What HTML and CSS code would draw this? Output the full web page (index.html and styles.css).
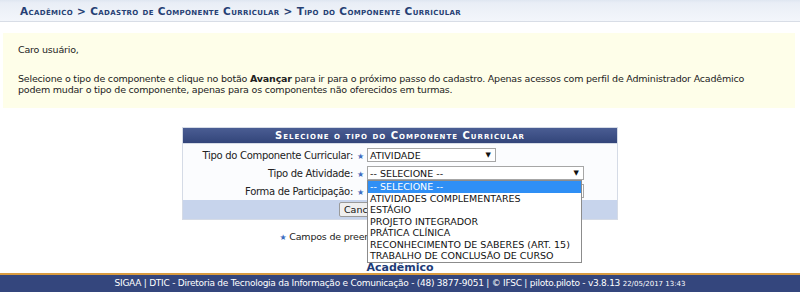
FILE: index.html
```html
<!DOCTYPE html>
<html lang="pt-BR">
<head>
    <meta charset="UTF-8">
    <title>SIGAA - Tipo do Componente Curricular</title>
    <link rel="stylesheet" href="styles.css">
</head>
<body>
    <div class="topo">
        <h2 class="trilha">Acadêmico &gt; Cadastro de Componente Curricular &gt; Tipo do Componente Curricular</h2>
    </div>

    <div class="aviso">
        <p>Caro usuário,</p>
        <p class="instrucao">Selecione o tipo de componente e clique no botão <b>Avançar</b> para ir para o próximo passo do cadastro. Apenas acessos com perfil de Administrador Acadêmico podem mudar o tipo de componente, apenas para os componentes não oferecidos em turmas.</p>
    </div>

    <table class="formulario">
        <caption>Selecione o tipo do Componente Curricular</caption>
        <tbody>
            <tr>
                <th>Tipo do Componente Curricular:</th>
                <td class="req"><span class="estrela">&#9733;</span></td>
                <td>
                    <div class="combo combo-tipo"><span>ATIVIDADE</span><span class="seta">&#9660;</span></div>
                </td>
            </tr>
            <tr>
                <th>Tipo de Atividade:</th>
                <td class="req"><span class="estrela">&#9733;</span></td>
                <td>
                    <div class="combo combo-atividade">
                        <span>-- SELECIONE --</span><span class="seta">&#9660;</span>
                        <ul class="opcoes">
                            <li class="ativa">-- SELECIONE --</li>
                            <li>ATIVIDADES COMPLEMENTARES</li>
                            <li>ESTÁGIO</li>
                            <li>PROJETO INTEGRADOR</li>
                            <li>PRÁTICA CLÍNICA</li>
                            <li>RECONHECIMENTO DE SABERES (ART. 15)</li>
                            <li>TRABALHO DE CONCLUSÃO DE CURSO</li>
                        </ul>
                    </div>
                </td>
            </tr>
            <tr>
                <th>Forma de Participação:</th>
                <td class="req"><span class="estrela">&#9733;</span></td>
                <td>
                    <div class="combo combo-forma"><span>-- SELECIONE --</span><span class="seta">&#9660;</span></div>
                </td>
            </tr>
        </tbody>
        <tfoot>
            <tr>
                <td colspan="3">
                    <button type="button">Cancelar</button>
                    <button type="button">Avançar &gt;&gt;</button>
                </td>
            </tr>
        </tfoot>
    </table>

    <p class="obrigatorio"><span class="estrela">&#9733;</span> Campos de preenchimento obrigatório.</p>

    <div class="modulo"><a href="#">Acadêmico</a></div>

    <div class="rodape">
        SIGAA | DTIC - Diretoria de Tecnologia da Informação e Comunicação - (48) 3877-9051 | &copy; IFSC | piloto.piloto - v3.8.13 <small>22/05/2017 13:43</small>
    </div>
</body>
</html>
```

FILE: styles.css
```css
body {
    margin: 0;
    font-family: "DejaVu Sans", Verdana, sans-serif;
    font-size: 9.5px;
    letter-spacing: -0.2px;
    color: #222;
    background: white;
}

.topo {
    height: 21px;
    background: linear-gradient(#dfe6f1 0, #e9eef6 3px, #f3f6fb 100%);
    border-bottom: 1px solid #d8dde6;
    padding-left: 20px;
}

.trilha {
    margin: 0;
    line-height: 23px;
    font-size: 10.5px;
    letter-spacing: 0.35px;
    font-weight: bold;
    font-variant: small-caps;
    color: #263f74;
}

.aviso {
    margin: 11px 5px 0 3px;
    height: 64px;
    padding: 11px 40px 0 15px;
    background: #fefee9;
    letter-spacing: -0.2px;
}

.aviso p {
    margin: 0;
    line-height: 11px;
}

.aviso .instrucao {
    margin-top: 18px;
}

.formulario {
    width: 436px;
    margin: 19px auto 0;
    border-collapse: collapse;
    border: 1px solid #d5dbe6;
    background: #fbfcfe;
}

.formulario caption {
    height: 15px;
    line-height: 16px;
    background: linear-gradient(#4a5d93, #33457a);
    color: white;
    font-size: 10px;
    font-weight: bold;
    font-variant: small-caps;
    letter-spacing: 1px;
    border: 1px solid #d5dbe6;
    border-bottom: none;
}

.formulario th {
    width: 170px;
    padding: 0 1px 0 0;
    text-align: right;
    font-weight: normal;
    font-size: 10px;
    letter-spacing: -0.3px;
    height: 18px;
}

.formulario td {
    padding: 0;
    height: 18px;
}

.formulario tbody tr:first-child > * {
    padding-top: 2px;
}

.formulario td.req {
    width: 13px;
    text-align: center;
}

.estrela {
    color: #3d6cc0;
    font-size: 8px;
}

.combo {
    position: relative;
    display: flex;
    justify-content: space-between;
    align-items: center;
    height: 12px;
    padding: 0 4px 0 2px;
    border: 1px solid #a6a6a6;
    background: white;
    font-size: 9.5px;
    letter-spacing: 0;
    color: #111;
}

.combo-tipo {
    width: 121px;
}

.combo-atividade,
.combo-forma {
    width: 209px;
}

.seta {
    font-size: 7px;
}

.opcoes {
    position: absolute;
    top: 13px;
    left: -1px;
    width: 213px;
    margin: 0;
    padding: 0;
    list-style: none;
    border: 1px solid #8c8c8c;
    background: white;
    z-index: 2;
}

.opcoes li {
    height: 11.5px;
    line-height: 11.5px;
    overflow: hidden;
    padding-left: 2px;
}

.opcoes li.ativa {
    background: #2f8ff5;
    color: white;
}

.formulario tfoot td {
    height: 19px;
    background: #c7d4ec;
    text-align: center;
}

.formulario button {
    font-family: "DejaVu Sans", Verdana, sans-serif;
    font-size: 9.5px;
    height: 15px;
    padding: 0 4px;
    background: #efefef;
    border: 1px solid #9a9a9a;
    border-radius: 2px;
    color: #111;
}

.obrigatorio {
    margin: 11px 0 0;
    padding-right: 52px;
    text-align: center;
    font-size: 9.5px;
    line-height: 11px;
}

.modulo {
    margin-top: 19px;
    text-align: center;
    line-height: 11px;
}

.modulo a {
    color: #1e3c78;
    font-size: 11px;
    letter-spacing: 0;
    font-weight: bold;
    text-decoration: none;
}

.rodape {
    height: 17px;
    line-height: 17px;
    border-top: 2px solid #d99b3f;
    background: #34467d;
    color: white;
    text-align: center;
    font-size: 9px;
    letter-spacing: -0.25px;
}

.rodape small {
    font-size: 7px;
    letter-spacing: 0;
}
```
